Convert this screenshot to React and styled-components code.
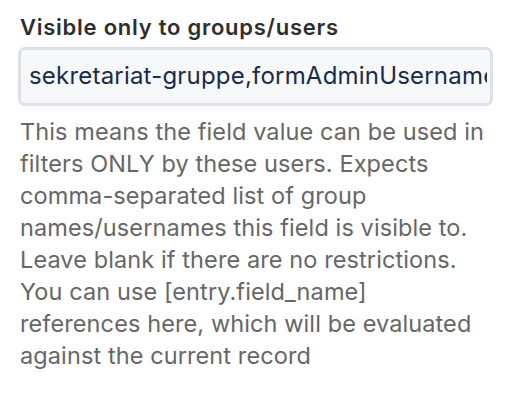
import React from 'react';
import styled, { createGlobalStyle } from 'styled-components';

const GlobalStyle = createGlobalStyle`
  body {
    margin: 0;
    background: #ffffff;
    font-family: Inter, "Noto Sans", sans-serif;
  }
`;

const Field = styled.div`
  width: 475px;
  padding: 14px 0 0 18px;
`;

const Label = styled.label`
  display: block;
  margin: 0 0 7px 2px;
  font-size: 22px;
  line-height: 26px;
  font-weight: 600;
  color: #2e2e2e;
  letter-spacing: 0.75px;
`;

const Input = styled.input`
  display: block;
  box-sizing: border-box;
  width: 100%;
  height: 59px;
  padding: 0 3px 3px 8px;
  border: 3px solid #dde1e6;
  border-radius: 7px;
  background: #f6f8fa;
  color: #1a2a4c;
  font-family: inherit;
  font-size: 24px;
  letter-spacing: 0.2px;
  outline: none;
`;

const Help = styled.p`
  max-width: 466px;
  margin: 10px 0 0 2px;
  font-size: 23.5px;
  line-height: 32px;
  letter-spacing: 0.1px;
  color: #666666;
`;

const App = () => {
  return (
    <>
      <GlobalStyle />
      <Field>
        <Label>Visible only to groups/users</Label>
        <Input readOnly value="sekretariat-gruppe,formAdminUsername" />
        <Help>
          This means the field value can be used in filters ONLY by these users.
          Expects comma-separated list of group names/usernames this field is
          visible to. Leave blank if there are no restrictions. You can use
          [entry.field_name] references here, which will be evaluated against
          the current record
        </Help>
      </Field>
    </>
  );
};

export default App;
